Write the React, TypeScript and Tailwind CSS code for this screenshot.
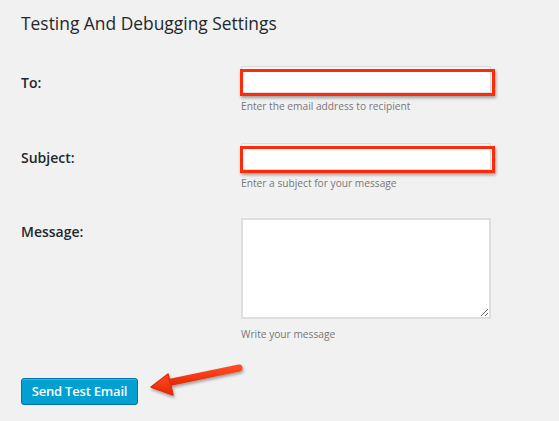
const FONT = { fontFamily: '"Open Sans", "Noto Sans", sans-serif' };

const Highlight = () => (
  <div className="pointer-events-none absolute -left-px top-[3px] h-[27px] w-[255px] border-[3px] border-[#ff2a0a] shadow-[1px_2px_3px_rgba(0,0,0,0.35)]" />
);

const FieldRow = ({
  label,
  help,
  highlight,
  rowClass,
  labelClass,
}: {
  label: string;
  help: string;
  highlight?: boolean;
  rowClass: string;
  labelClass: string;
}) => (
  <div className={`grid grid-cols-[220px_1fr] ${rowClass}`}>
    <label className={`text-[14px] font-semibold text-[#23282d] ${labelClass}`}>{label}</label>
    <div>
      <div className="relative w-[250px]">
        <input
          type="text"
          className="block h-[27px] w-[250px] border border-[#dcdcdc] bg-white shadow-[inset_0_1px_2px_rgba(0,0,0,0.07)] outline-none"
        />
        {highlight ? <Highlight /> : null}
      </div>
      <p className="mt-[6px] text-[10.2px] leading-[14px] text-[#777]">{help}</p>
    </div>
  </div>
);

export default function App() {
  return (
    <div className="relative h-[421px] w-[559px] overflow-hidden bg-[#f1f1f1] px-[21px] pt-[9px]" style={FONT}>
      <h2 className="text-[17.4px] font-medium leading-[28px] text-[#23282d]">Testing And Debugging Settings</h2>

      <FieldRow
        label="To:"
        help="Enter the email address to recipient"
        highlight
        rowClass="mt-[29px]"
        labelClass="pt-[6px]"
      />
      <FieldRow
        label="Subject:"
        help="Enter a subject for your message"
        highlight
        rowClass="mt-[30px]"
        labelClass="pt-[4px]"
      />

      <div className="mt-[28px] grid grid-cols-[220px_1fr]">
        <label className="pt-[3px] text-[14px] font-semibold text-[#23282d]">Message:</label>
        <div>
          <textarea className="block h-[101px] w-[250px] resize border-2 border-[#dedede] bg-white outline-none" />
          <p className="mt-[8px] text-[10.2px] leading-[14px] text-[#777]">Write your message</p>
        </div>
      </div>

      <button className="mt-[37px] h-[27px] w-[117px] rounded-[3px] border border-[#0073aa] bg-[#00a0d2] text-[13px] font-semibold tracking-[-0.2px] text-white shadow-[0_1px_0_rgba(120,200,230,0.5)_inset]">
        Send Test Email
      </button>

      <svg className="absolute left-[140px] top-[355px]" width="110" height="45" viewBox="0 0 110 45">
        <defs>
          <linearGradient id="ar" x1="0" y1="0" x2="0" y2="1">
            <stop offset="0" stopColor="#ff4a22" />
            <stop offset="1" stopColor="#e42a08" />
          </linearGradient>
          <filter id="sh" x="-20%" y="-40%" width="140%" height="180%">
            <feDropShadow dx="1" dy="2" stdDeviation="1.5" floodColor="#000" floodOpacity="0.35" />
          </filter>
        </defs>
        <g filter="url(#sh)">
          <path d="M22 29 L99 13" stroke="url(#ar)" strokeWidth="7" strokeLinecap="round" />
          <path d="M11 32 L28 19 L33 40 Z" fill="url(#ar)" stroke="#e42a08" strokeWidth="1.5" strokeLinejoin="round" />
        </g>
      </svg>
    </div>
  );
}
